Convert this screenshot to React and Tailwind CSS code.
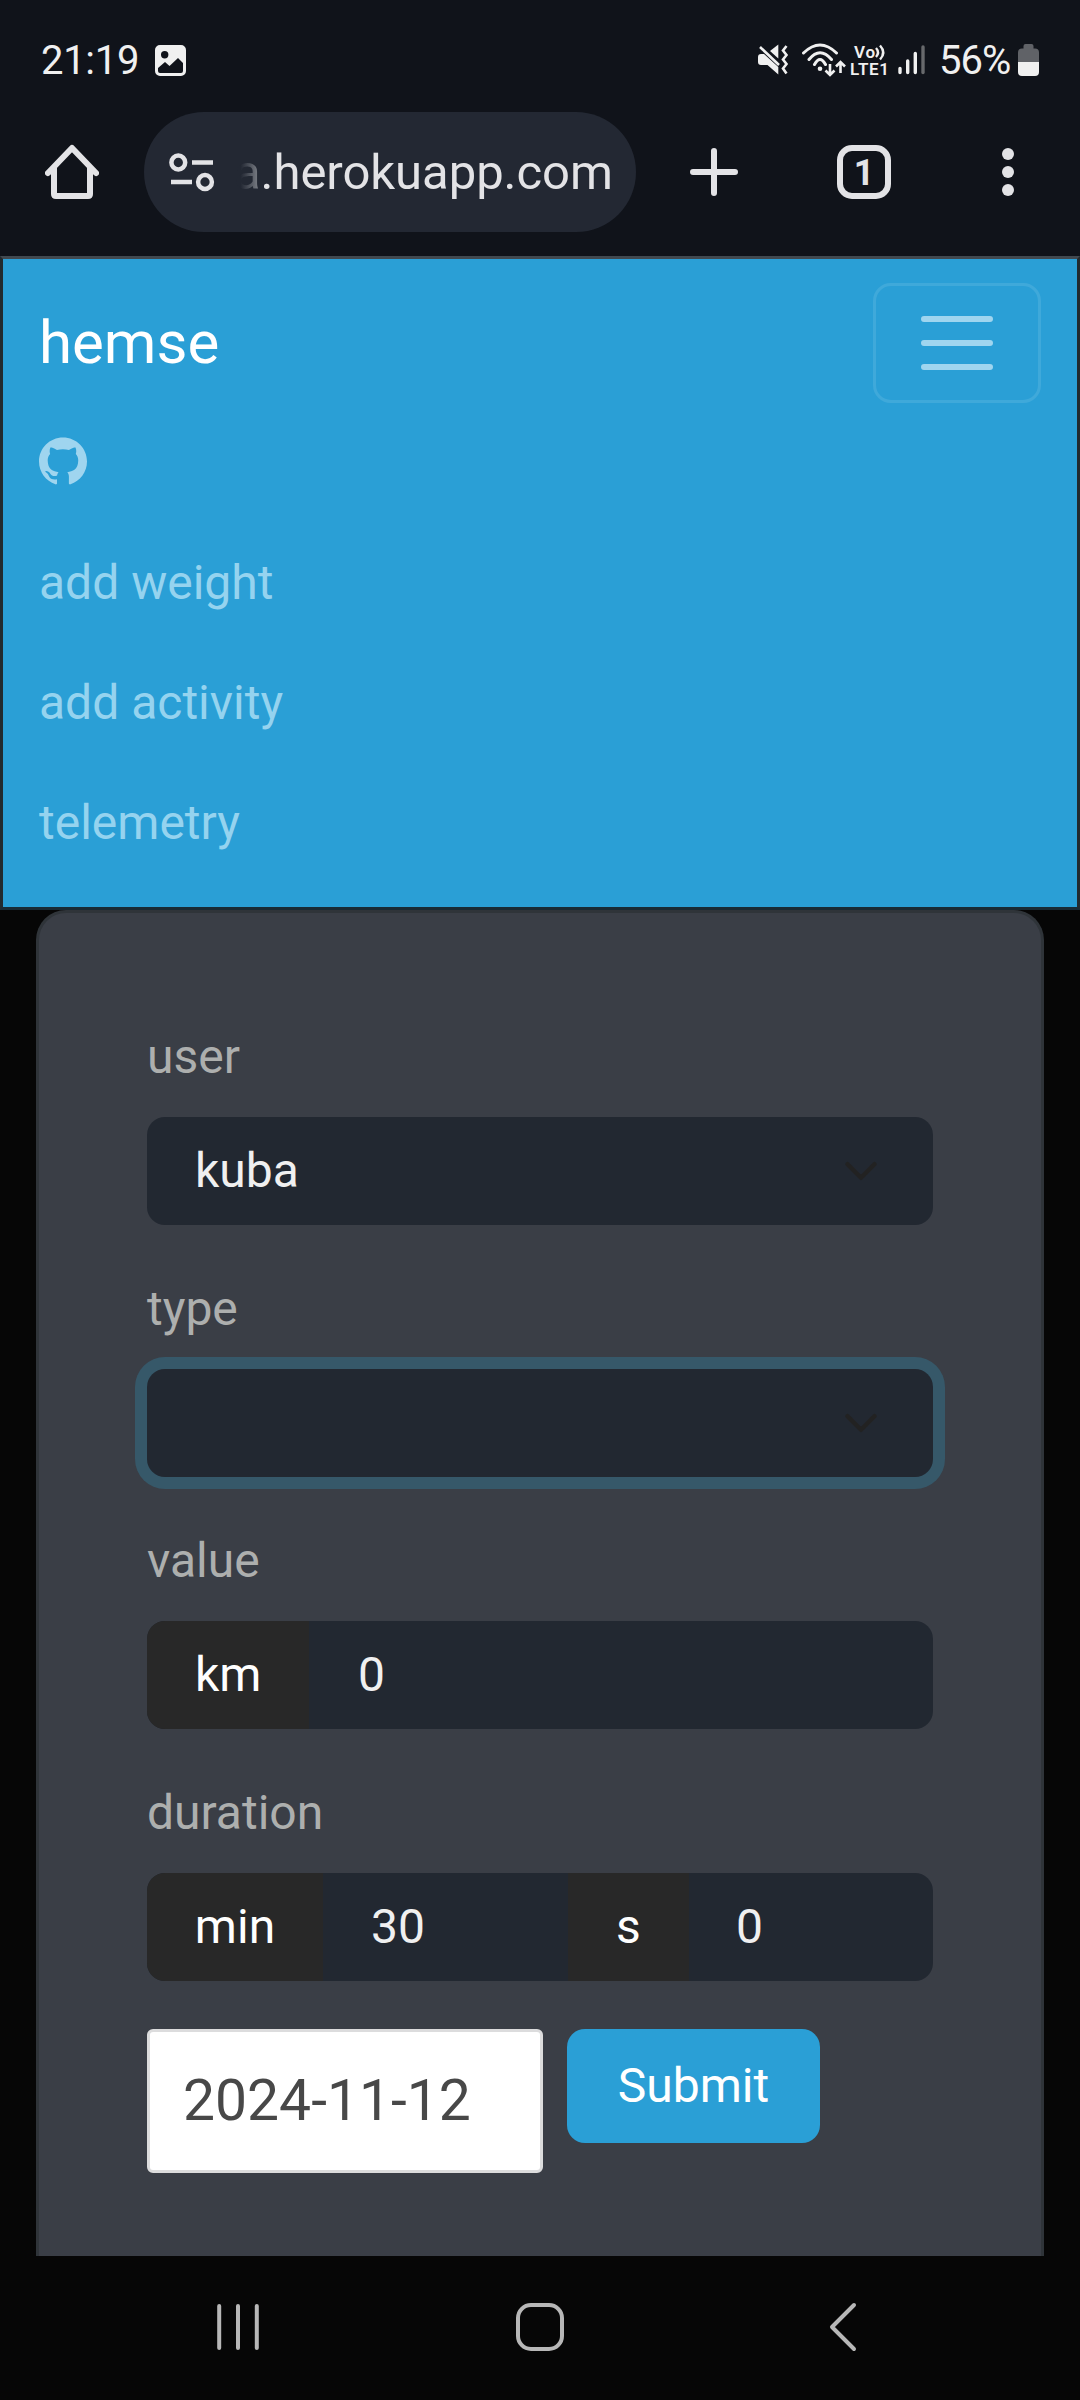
import { SiGithub } from "react-icons/si";

function StatusBar() {
  return (
    <div className="flex h-[112px] items-start justify-between pt-[37px] pr-[41px] pl-[41px] text-[#f0f0f0]">
      <div className="flex">
        <span className="h-[47px] w-[114px] text-[40px] leading-[47px] tracking-[-0.3px]">21:19</span>
        <svg className="mt-[8px] h-[31px] w-[31px]" viewBox="0 0 31 31">
          <path
            fill="currentColor"
            fillRule="evenodd"
            d="M5 0h21a5 5 0 0 1 5 5v21a5 5 0 0 1-5 5H5a5 5 0 0 1-5-5V5a5 5 0 0 1 5-5ZM9.700 6a3.700 3.700 0 1 0 0 7.400a3.700 3.700 0 0 0 0-7.400ZM3 23v3q0 2 2 2h21q2 0 2-2v-8l-5-5l-8.500 8l-4.500-4Z"
          />
        </svg>
      </div>
      <div className="flex">
        <svg className="mt-[3px] h-[44px] w-[181px]" viewBox="0 0 181 44" fill="none" stroke="currentColor">
          <path d="M0 17q0-3 3-3h3l14.300 13v7.500L9.500 25H3q-3 0-3-3Z" fill="currentColor" stroke="none" />
          <path d="M12 11l8.300-6.500v14Z" fill="currentColor" stroke="none" />
          <path d="M2 7l19 18" strokeWidth="2.600" />
          <path d="M28.500 6l-3.500 4.500l3.500 4.500l-3.500 4.500l3.500 4.500l-3.500 4.500l3.500 5" strokeWidth="2.600" />
          <path d="M45.500 13Q62 -3 78.500 13M51 19.500Q62 6 73.500 19.500M56.500 24.500Q62 14.500 67.500 24.500" strokeWidth="3" strokeLinecap="round" />
          <circle cx="62" cy="28.700" r="2.300" fill="currentColor" stroke="none" />
          <path d="M72 24v11m-4.500-4.500l4.500 4.500l4.500-4.500M82.500 33V22m-4.500 4.500l4.500-4.500l4.500 4.500" strokeWidth="2.600" />
          <text x="96" y="18" fontSize="17" fontWeight="600" fill="currentColor" stroke="none" textLength="21">Vo</text>
          <path d="M118 8q4 4.500 0 9M122 5.500q6.500 7 0 14" strokeWidth="2.400" />
          <text x="92" y="35" fontSize="17" fontWeight="600" fill="currentColor" stroke="none" textLength="39">LTE1</text>
          <path d="M142 28.500v4M149.700 21v11.500M157.300 13.500v19" strokeWidth="3.400" strokeLinecap="round" />
          <path d="M165 7v25.500" stroke="#67696c" strokeWidth="3.400" strokeLinecap="round" />
        </svg>
        <span className="h-[47px] w-[79px] text-[40px] leading-[47px] tracking-[-1px]">56%</span>
        <svg className="mt-[7px] h-[32px] w-[21px]" viewBox="0 0 21 32">
          <path d="M0 19V8.500q0-4 4-4h1.500V2q0-2 2-2h6q2 0 2 2v2.500H17q4 0 4 4V19Z" fill="#606267" />
          <path d="M0 18h21v10q0 4-4 4H4q-4 0-4-4Z" fill="currentColor" />
        </svg>
      </div>
    </div>
  );
}

function BrowserBar() {
  return (
    <div className="flex h-[120px] items-center text-[#e3e3e6]">
      <svg className="ml-[45px] h-[56px] w-[54px]" viewBox="0 0 54 56" fill="none" stroke="currentColor" strokeWidth="6" strokeLinecap="round" strokeLinejoin="round">
        <path d="M3 29L27 4l24 25M9 24v26q0 2 2 2h32q2 0 2-2V24" />
      </svg>
      <div className="ml-[45px] flex h-[120px] w-[492px] items-center rounded-full bg-[#232833] pl-[25px]">
        <svg className="h-[40px] w-[46px]" viewBox="0 0 46 40" fill="none" stroke="currentColor" strokeWidth="4.500">
          <circle cx="9.300" cy="10.500" r="6.900" />
          <path d="M23 10.500h21M2 30h21" />
          <circle cx="36" cy="30" r="6.900" />
        </svg>
        <span className="mt-[2px] ml-[19px] flex whitespace-nowrap text-[49px] leading-[60px] tracking-[-0.050px]">
          <span className="bg-gradient-to-r from-[#232833] from-25% to-[#8b8e94] bg-clip-text text-transparent">a</span>
          <span>.herokuapp.com</span>
        </span>
      </div>
      <svg className="ml-[54px] h-[48px] w-[48px]" viewBox="0 0 48 48" stroke="currentColor" strokeWidth="6" strokeLinecap="round">
        <path d="M24 3v42M3 24h42" />
      </svg>
      <div className="ml-[99px] flex h-[54px] w-[54px] items-center justify-center rounded-[15px] border-[6px] pt-px text-[36px] leading-none font-bold">
        1
      </div>
      <svg className="ml-[111px] h-[48px] w-[12px]" viewBox="0 0 12 48" fill="currentColor">
        <circle cx="6" cy="6" r="6" />
        <circle cx="6" cy="24" r="6" />
        <circle cx="6" cy="42" r="6" />
      </svg>
    </div>
  );
}

function Navbar() {
  return (
    <nav className="h-[654px] border-[3px] border-t-[#414950] border-r-[#222a2e] border-b-[#182b35] border-l-[#222a2e] bg-[#2a9fd6] px-[36px] pt-[24px]">
      <div className="flex h-[120px] items-center justify-between">
        <span className="text-[60px] leading-[90px] text-white">hemse</span>
        <button className="flex h-[120px] w-[168px] items-center justify-center rounded-[18px] border-[3px] border-white/10">
          <svg className="h-[54px] w-[72px]" viewBox="0 0 72 54" stroke="#9fd5ef" strokeWidth="6" strokeLinecap="round">
            <path d="M3 3h66M3 27h66M3 51h66" />
          </svg>
        </button>
      </div>
      <ul className="text-[48px] leading-[72px] text-[#95d3ef]">
        <li className="h-[120px] pt-[34px]">
          <SiGithub className="h-[48px] w-[48px] text-[#9fd5ef]" />
        </li>
        <li className="py-[24px]">add weight</li>
        <li className="py-[24px]">add activity</li>
        <li className="py-[24px]">telemetry</li>
      </ul>
    </nav>
  );
}

function Field({ label, children }) {
  return (
    <div className="h-[252px]">
      <div className="h-[96px] text-[48px] leading-[72px] text-[#adafae]">{label}</div>
      {children}
    </div>
  );
}

function Select({ value, focused }) {
  return (
    <div
      className={
        "flex h-[108px] items-center justify-between rounded-[18px] bg-[#222831] pr-[54px] pl-[48px] " +
        (focused ? "ring-[12px] ring-[#365869]" : "")
      }
    >
      <span>{value}</span>
      <svg className="h-[36px] w-[36px]" viewBox="0 0 16 16" fill="none" stroke="#222" strokeWidth="2" strokeLinecap="round" strokeLinejoin="round">
        <path d="m2 5 6 6 6-6" />
      </svg>
    </div>
  );
}

export default function App() {
  return (
    <div className="flex h-[2400px] w-[1080px] flex-col overflow-hidden bg-[#060606] font-[Roboto,sans-serif]">
      <header className="h-[256px] bg-[#10131a]">
        <StatusBar />
        <BrowserBar />
      </header>
      <Navbar />
      <main className="mx-[36px] h-[1346px] rounded-t-[30px] border-x-[3px] border-t-[3px] border-[#2f3439] bg-[#3a3e46] px-[108px] pt-[108px] text-[48px] leading-[72px] text-[#f0f0f0]">
        <Field label="user">
          <Select value="kuba" />
        </Field>
        <Field label="type">
          <Select value="" focused />
        </Field>
        <Field label="value">
          <div className="flex h-[108px] items-center overflow-hidden rounded-[18px] bg-[#222831]">
            <span className="h-full w-[162px] bg-[#282828] py-[18px] pl-[48px] text-white">km</span>
            <span className="pl-[49px]">0</span>
          </div>
        </Field>
        <Field label="duration">
          <div className="flex h-[108px] items-center overflow-hidden rounded-[18px] bg-[#222831]">
            <span className="h-full w-[176px] bg-[#282828] py-[18px] text-center text-white">min</span>
            <span className="w-[245px] pl-[48px]">30</span>
            <span className="h-full w-[121px] bg-[#282828] py-[18px] text-center text-white">s</span>
            <span className="pl-[47px]">0</span>
          </div>
        </Field>
        <div className="flex items-start gap-[24px]">
          <div className="flex h-[144px] w-[396px] items-center rounded-[6px] border-[3px] border-[#dcdcdd] bg-white pl-[33px] text-[57px] text-[#484848]">
            2024-11-12
          </div>
          <button className="h-[114px] w-[253px] rounded-[18px] bg-[#2a9fd6] text-center text-white">Submit</button>
        </div>
      </main>
      <footer className="flex h-[144px] items-center bg-[#060606] pb-[2px]">
        <svg className="ml-[217px] h-[48px] w-[42px]" viewBox="0 0 42 48" stroke="#b7b7b7" strokeWidth="4" strokeLinecap="round">
          <path d="M2.200 3v42M21 3v42M39.800 3v42" />
        </svg>
        <div className="ml-[257px] h-[48px] w-[48px] rounded-[15px] border-[4px] border-[#b7b7b7]" />
        <svg className="ml-[264px] h-[50px] w-[30px]" viewBox="0 0 30 50" fill="none" stroke="#b7b7b7" strokeWidth="4" strokeLinecap="round" strokeLinejoin="round">
          <path d="M26 3L4 25l22 22" />
        </svg>
      </footer>
    </div>
  );
}
